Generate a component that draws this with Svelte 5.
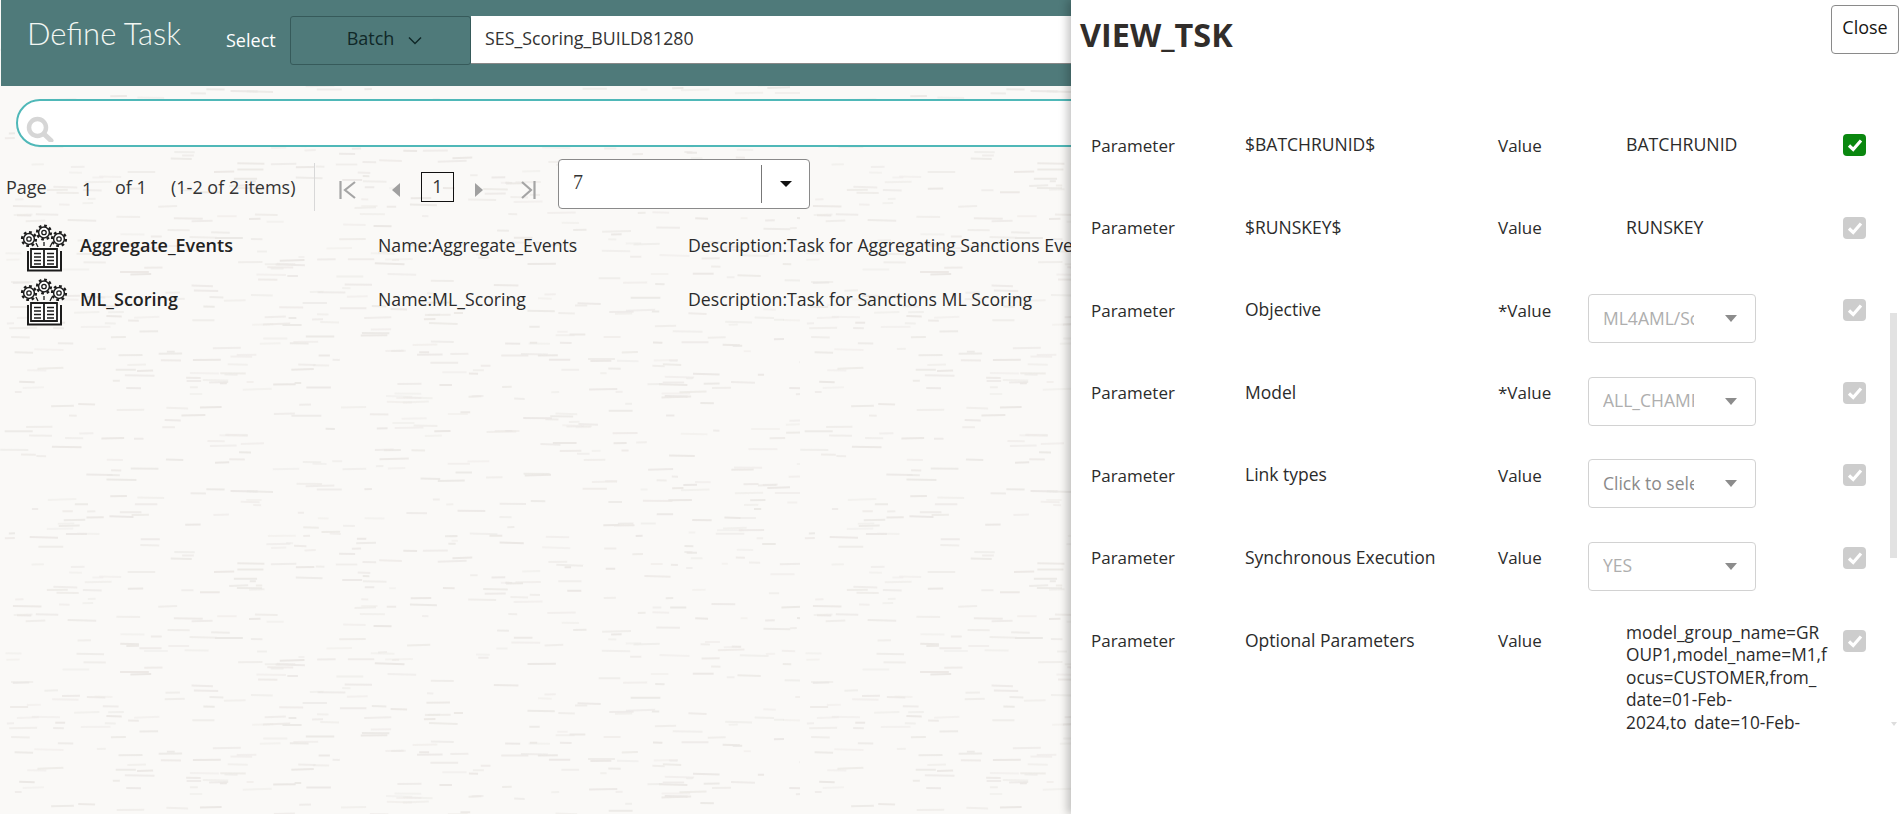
<script>
  let seed = 1234567;
  const rnd = () => {
    seed = (seed + 0x6d2b79f5) | 0;
    let t = Math.imul(seed ^ (seed >>> 15), 1 | seed);
    t = (t + Math.imul(t ^ (t >>> 7), 61 | t)) ^ t;
    return ((t ^ (t >>> 14)) >>> 0) / 4294967296;
  };
  const dashes = Array.from({ length: 640 }, () => ({
    x: rnd() * 800, y: rnd() * 400, w: 6 + rnd() * 24, o: 0.4 + rnd() * 0.6, t: (rnd() - 0.5) * 4
  }));
  const rows = [
    { name: '$BATCHRUNID$', label: 'Value', text: 'BATCHRUNID', on: true },
    { name: '$RUNSKEY$', label: 'Value', text: 'RUNSKEY' },
    { name: 'Objective', label: '*Value', sel: 'ML4AML/Scoring' },
    { name: 'Model', label: '*Value', sel: 'ALL_CHAMPIONS' },
    { name: 'Link types', label: 'Value', sel: 'Click to select', dark: true },
    { name: 'Synchronous Execution', label: 'Value', sel: 'YES' },
    { name: 'Optional Parameters', label: 'Value', multi: ['model_group_name=GR', 'OUP1,model_name=M1,f', 'ocus=CUSTOMER,from_', 'date=01-Feb-', '2024,to_date=10-Feb-'] }
  ];
  const tasks = [
    { name: 'Aggregate_Events', desc: 'Task for Aggregating Sanctions Events' },
    { name: 'ML_Scoring', desc: 'Task for Sanctions ML Scoring' }
  ];
</script>

{#snippet gear(cx, cy)}
  <circle {cx} {cy} r="6.9" fill="none" stroke="#1c1c1c" stroke-width="2.4" stroke-dasharray="2.7 2.7" />
  <circle {cx} {cy} r="5.4" fill="#fff" stroke="#1c1c1c" stroke-width="1.5" />
  <circle {cx} {cy} r="2.2" fill="none" stroke="#1c1c1c" stroke-width="1.3" />
{/snippet}

{#snippet taskIcon()}
  <svg class="task-icon" width="48" height="48" viewBox="0 0 48 48">
    {@render gear(9, 15)}
    {@render gear(24, 8.5)}
    {@render gear(39, 15)}
    <path d="M24 18v4M16 19l2 4M32 19l-2 4" stroke="#1c1c1c" stroke-width="1.3" fill="none" />
    <path d="M8 27v19.5h33V27" fill="#fff" stroke="#1c1c1c" stroke-width="2" />
    <path d="M11 25h13v18H11zM24 25h13v18H24z" fill="#fff" stroke="#1c1c1c" stroke-width="1.8" />
    <path d="M14 29.5h7M14 33h7M14 36.5h7M14 40h7M27 29.5h7M27 33h7M27 36.5h7M27 40h7" stroke="#1c1c1c" stroke-width="1.6" />
  </svg>
{/snippet}

<div class="page">
  <svg class="texture" width="100%" height="100%" aria-hidden="true">
    <defs>
      <filter id="soft"><feGaussianBlur stdDeviation="0.6" /></filter>
      <pattern id="paper" width="800" height="400" patternUnits="userSpaceOnUse">
        <g filter="url(#soft)">
          {#each dashes as d}
            <rect x={d.x} y={d.y} width={d.w} height="2" fill="#ebe8e5" opacity={d.o} transform="rotate({d.t} {d.x} {d.y})" />
          {/each}
        </g>
      </pattern>
    </defs>
    <rect width="100%" height="100%" fill="url(#paper)" />
  </svg>

  <header class="bar">
    <h1>Define Task</h1>
    <span class="select-label">Select</span>
    <button class="batch">
      <span>Batch</span>
      <svg width="14" height="9" viewBox="0 0 14 9"><path d="M1 1.5l6 6 6-6" fill="none" stroke="#102828" stroke-width="1.5" /></svg>
    </button>
    <div class="build">SES_Scoring_BUILD81280</div>
  </header>

  <div class="search">
    <svg width="28" height="26" viewBox="0 0 28 26">
      <circle cx="11.5" cy="11.5" r="8.5" fill="none" stroke="#d6d6d6" stroke-width="4.5" />
      <path d="M18 18l7 6.5" stroke="#d6d6d6" stroke-width="5" stroke-linecap="round" />
    </svg>
  </div>

  <div class="pager">
    <span class="pg-page">Page</span>
    <span class="pg-num">1</span>
    <span class="pg-of">of 1</span>
    <span class="pg-items">(1-2 of 2 items)</span>
    <span class="pg-sep"></span>
    <svg class="pg-first" width="17" height="18" viewBox="0 0 17 18"><path d="M1.5 0v18M16 1L6 9l10 8" fill="none" stroke="#a5a5a5" stroke-width="2.2" /></svg>
    <svg class="pg-prev" width="8" height="14" viewBox="0 0 8 14"><path d="M8 0v14L0 7z" fill="#a0a0a0" /></svg>
    <span class="pg-box">1</span>
    <svg class="pg-next" width="8" height="14" viewBox="0 0 8 14"><path d="M0 0v14l8-7z" fill="#a0a0a0" /></svg>
    <svg class="pg-last" width="15" height="18" viewBox="0 0 15 18"><path d="M13.5 0v18M1 1l9 8-9 8" fill="none" stroke="#a5a5a5" stroke-width="2.2" /></svg>
    <div class="pg-size">
      <span class="pg-size-val">7</span>
      <span class="pg-size-div"></span>
      <span class="pg-caret"></span>
    </div>
  </div>

  <ul class="tasks">
    {#each tasks as t}
      <li>
        {@render taskIcon()}
        <strong>{t.name}</strong>
        <span class="t-name">Name:{t.name}</span>
        <span class="t-desc">Description:{t.desc}</span>
      </li>
    {/each}
  </ul>

  <aside class="panel">
    <div class="panel-head">
      <h2>VIEW_TSK</h2>
      <button class="close">Close</button>
    </div>
    <div class="panel-body">
      {#each rows as r}
        <div class="row">
          <span class="p">Parameter</span>
          <span class="n">{r.name}</span>
          <span class="l">{r.label}</span>
          {#if r.sel}
            <div class="sel" class:dark={r.dark}>
              <span class="sel-text">{r.sel}</span>
              <span class="sel-caret"></span>
            </div>
          {:else if r.multi}
            <div class="multi">{#each r.multi as line}<div>{line}</div>{/each}</div>
          {:else}
            <span class="v">{r.text}</span>
          {/if}
          <span class="chk" class:on={r.on}>
            <svg width="16" height="14" viewBox="0 0 16 14"><path d="M2 7.5l4.2 4L14 2.5" fill="none" stroke="#fff" stroke-width="3.2" /></svg>
          </span>
        </div>
      {/each}
      <div class="scroll">
        <span class="sb-up"></span>
        <span class="sb-thumb"></span>
        <span class="sb-down"></span>
      </div>
    </div>
  </aside>
</div>

<style>
  :global(body) { margin: 0; background: #faf9f7; }
  .page {
    position: relative;
    width: 1899px;
    height: 814px;
    overflow: hidden;
    font-family: "Open Sans", "Noto Sans", sans-serif;
    font-size: 17px;
    color: #2b2b2b;
  }
  .texture { position: absolute; inset: 0; }
  .bar {
    position: relative;
    height: 86px;
    margin-left: 1px;
    background: #4f7a7a;
    display: flex;
    align-items: flex-start;
    box-sizing: border-box;
    padding-top: 16px;
  }
  h1 {
    margin: -3px 0 0 26px;
    width: 199px;
    flex: none;
    font: 300 31px/40px "Lato", sans-serif;
    color: #f2f6f2;
    white-space: nowrap;
  }
  .select-label { color: #fff; font-size: 18px; line-height: 24px; margin-top: 12px; width: 64px; flex: none; font-weight: 500; }
  .batch {
    width: 181px;
    height: 49px;
    flex: none;
    box-sizing: border-box;
    background: #4f7a7a;
    border: 1px solid #365a5a;
    border-radius: 3px;
    display: flex;
    align-items: center;
    justify-content: center;
    gap: 14px;
    padding: 0 0 5px 8px;
    font: 500 18px "Open Sans", sans-serif;
    color: #102828;
  }
  .batch svg { margin-top: 4px; }
  .build {
    flex: 1;
    height: 48px;
    box-sizing: border-box;
    background: #fff;
    border-bottom: 1px solid #888;
    padding-left: 14px;
    line-height: 44px;
    font-size: 17.8px;
    color: #333;
  }
  .search {
    position: relative;
    margin: 13px 0 0 16px;
    height: 48px;
    box-sizing: border-box;
    background: #fff;
    border: 2px solid #4fb8b8;
    border-radius: 24px;
    padding: 15px 0 0 8px;
  }
  .pager {
    position: relative;
    display: flex;
    align-items: center;
    box-sizing: border-box;
    height: 50px;
    margin-top: 12px;
    padding: 6px 0 0 6px;
    font-size: 18px;
    color: #333;
  }
  .pg-page { width: 76px; }
  .pg-num { width: 33px; padding-top: 3px; }
  .pg-of { width: 56px; }
  .pg-items { width: 143px; white-space: nowrap; }
  .pg-sep { width: 1px; height: 48px; background: #d8d8d8; margin-right: 24px; }
  .pg-first { margin: 5px 36px 0 0; }
  .pg-prev { margin: 5px 21px 0 0; }
  .pg-box {
    width: 33px; height: 30px; box-sizing: border-box;
    border: 1px solid #111; text-align: center; line-height: 26px;
    margin: 0 21px 0 0; background: transparent;
  }
  .pg-next { margin: 5px 38px 0 0; }
  .pg-last { margin: 5px 22px 0 0; }
  .pg-size {
    width: 252px; height: 50px; box-sizing: border-box;
    background: #fff; border: 1px solid #8a8a8a; border-radius: 4px;
    display: flex; align-items: center; position: relative; margin-top: -7px;
  }
  .pg-size-val { width: 202px; padding-left: 14px; box-sizing: border-box; margin-top: -2px; font-family: "Liberation Serif", "DejaVu Serif", serif; font-size: 20px; }
  .pg-size-div { width: 1px; height: 38px; background: #777; }
  .pg-caret {
    margin: 0 0 0 18px;
    border-left: 6.5px solid transparent;
    border-right: 6.5px solid transparent;
    border-top: 6.5px solid #111;
  }
  .tasks { position: relative; list-style: none; margin: 9px 0 0; padding: 0; font-size: 17.7px; }
  .tasks li { display: flex; align-items: center; height: 54px; padding-left: 20px; white-space: nowrap; }
  .task-icon { margin: 6px 12px 0 0; flex: none; }
  .tasks strong { width: 298px; font-weight: 600; color: #222; font-size: 18px; }
  .t-name { width: 310px; }

  .panel {
    position: absolute;
    top: 0; bottom: 0; left: 1071px; right: 0;
    background: #fff;
    box-shadow: -4px 0 8px rgba(0, 0, 0, 0.22);
  }
  .panel-head { display: flex; justify-content: space-between; align-items: flex-start; height: 105px; padding: 5px 0 0 9px; box-sizing: border-box; }
  h2 { margin: 9px 0 0; font: 700 32.4px/40px "Open Sans", sans-serif; color: #312d2a; }
  .close {
    width: 68px; height: 49px; box-sizing: border-box;
    background: #fff; border: 1px solid #8a8a8a; border-radius: 4px;
    font: 400 18px "Open Sans", sans-serif; color: #161513; padding: 0 0 6px;
  }
  .panel-body { position: relative; height: 629px; overflow: hidden; }
  .row {
    display: grid;
    grid-template-columns: 154px 253px 90px 38px 217px 40px;
    height: 82.6px;
    padding-left: 20px;
    box-sizing: border-box;
    align-items: start;
  }
  .p, .l { padding-top: 28.5px; line-height: 24px; }
  .n { padding-top: 27px; line-height: 24px; white-space: nowrap; font-size: 17.5px; }
  .v { grid-column: 5; padding-top: 27px; line-height: 24px; font-size: 17.7px; }
  .sel {
    grid-column: 4 / span 2;
    width: 168px; height: 49px; margin-top: 24px; box-sizing: border-box;
    border: 1px solid #d2d2d2; border-radius: 4px;
    display: flex; align-items: center; padding: 0 0 2px 14px; color: #aeaeae; font-size: 17.5px;
  }
  .sel.dark { color: #8a8a8a; }
  .sel-text { width: 91px; overflow: hidden; white-space: nowrap; flex: none; }
  .sel-caret {
    margin-left: 31px;
    margin-top: 2px;
    border-left: 6px solid transparent;
    border-right: 6px solid transparent;
    border-top: 7px solid #8c8c8c;
  }
  .multi { grid-column: 5; margin-top: 21px; width: 212px; line-height: 22.5px; white-space: nowrap; overflow: hidden; height: 108px; font-size: 17.3px; }
  .chk {
    grid-column: 6; margin-top: 29px; width: 23px; height: 22px; border-radius: 4px;
    background: #cdcdcd; display: flex; align-items: center; justify-content: center;
  }
  .chk.on { background: #0a870f; }
  .scroll { position: absolute; right: 1px; top: -24px; width: 8px; height: 645px; }
  .sb-up, .sb-down { position: absolute; left: 1px; border-left: 3px solid transparent; border-right: 3px solid transparent; }
  .sb-up { top: 0; border-bottom: 4px solid #ddd; }
  .sb-down { bottom: 0; border-top: 4px solid #ddd; }
  .sb-thumb { position: absolute; top: 232px; left: 0; width: 7px; height: 245px; background: #e2e2e2; }
</style>
